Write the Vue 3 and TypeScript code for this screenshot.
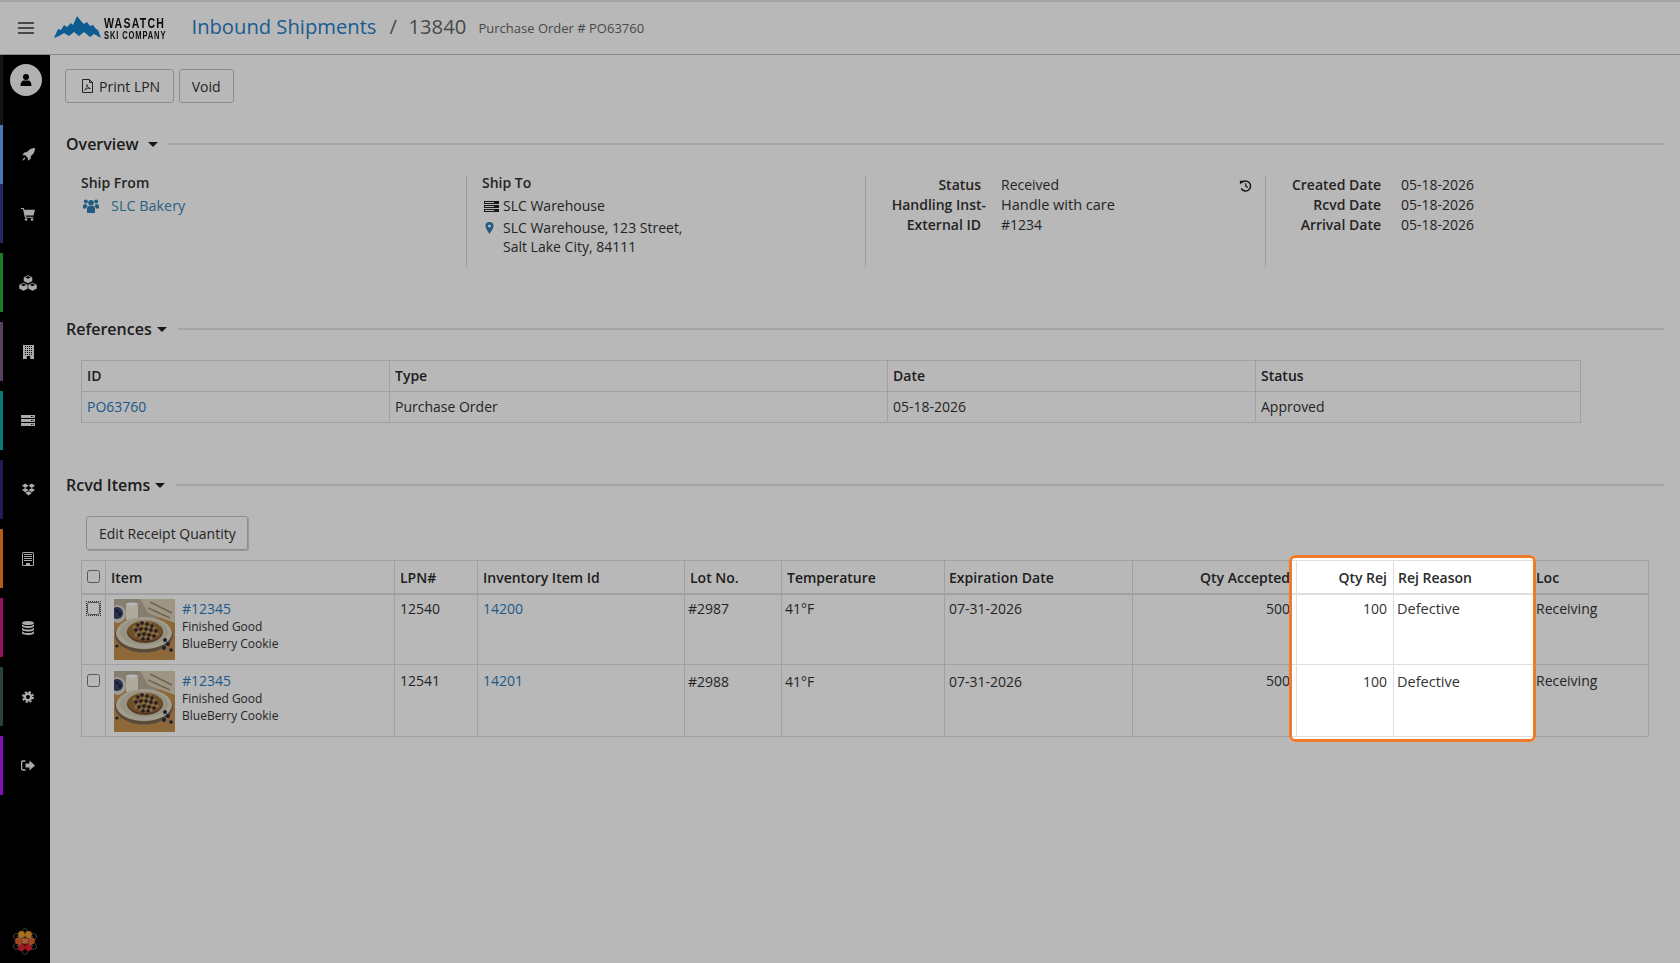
<script setup lang="ts">
interface Row {
  id: number
  lpn: string
  inv: string
  lot: string
  first: boolean
}
const rows: Row[] = [
  { id: 1, lpn: '12540', inv: '14200', lot: '#2987', first: true },
  { id: 2, lpn: '12541', inv: '14201', lot: '#2988', first: false }
]
const berries: [number, number][] = [
  [24, 26], [28, 24], [33, 25], [38, 27], [22, 31], [27, 30], [32, 30], [37, 31], [42, 32], [25, 36], [30, 35], [35, 36], [40, 37], [29, 40], [34, 40]
]
const crumbs: [number, number][] = [
  [20, 28], [26, 27], [30, 27], [35, 28], [40, 29], [24, 33], [29, 32], [34, 33], [39, 34], [43, 35], [22, 36], [27, 38], [32, 38], [37, 39], [31, 23], [36, 23], [25, 23]
]
</script>

<template>
  <div class="page">
    <header class="topbar">
      <button class="burger" aria-label="Menu"><span></span><span></span><span></span></button>
      <div class="logo">
        <svg class="peak" width="47" height="22" viewBox="0 0 47 22"><polygon points="0,22 4,13 7,14 10,9 13,11 17,7 19,9 23,0 27,5 30,8 33,6 36,10 39,9 42,13 44,14 47,22 40,18 36,21 30,16 25,20 20,16 15,20 10,17 5,20" /></svg>
        <div class="wordmark">
          <span class="wm-top">WASATCH</span>
          <span class="wm-bot">SKI COMPANY</span>
        </div>
      </div>
      <a class="crumb">Inbound Shipments</a>
      <span class="slash">/</span>
      <span class="docno">13840</span>
      <span class="subno">Purchase Order # PO63760</span>
    </header>

    <div class="body">
      <nav class="side">
        <div class="avatar-wrap">
          <div class="avatar">
            <svg width="14" height="14" viewBox="0 0 14 14"><circle cx="7" cy="4" r="3" /><path d="M1.500 13c0-3.600 1.600-5.500 3-5.500h5c1.400 0 3 1.900 3 5.500z" /></svg>
          </div>
        </div>
        <a class="nav blue first-nav">
          <svg width="15" height="15" viewBox="0 0 16 16"><path d="M15 1c-3.800.1-6.500 1.600-8.600 4.400L3.600 5.800 1.400 8.400l3.200.5 2.500 2.500.5 3.200 2.600-2.200.4-2.800C13.400 7.500 14.900 4.800 15 1zM3.400 11.200 1 15l3.800-2.400z" /></svg>
        </a>
        <a class="nav navy">
          <svg width="14" height="14" viewBox="0 0 16 16"><path d="M0 1h3.200l.5 2H16l-1.700 6.800H5.400l.3 1.200H14v1.400H4.500L2.200 2.400H0z" /><circle cx="5.800" cy="14.300" r="1.500" /><circle cx="12.600" cy="14.300" r="1.500" /></svg>
        </a>
        <a class="nav green">
          <svg width="18" height="16" viewBox="0 0 18 16">
            <g v-for="c in [[9, 0], [4.500, 7.500], [13.500, 7.500]]" :key="c[0]" :transform="`translate(${c[0] - 4.500} ${c[1]})`">
              <polygon points="4.500,0 9,2.200 9,6.300 4.500,8.500 0,6.300 0,2.200" stroke="#000" stroke-width=".5" />
              <polygon points="4.500,1.100 7.100,2.400 4.500,3.700 1.900,2.400" fill="#000" />
            </g>
          </svg>
        </a>
        <a class="nav plum">
          <svg width="11" height="14" viewBox="0 0 11 14"><rect width="11" height="14" /><path d="M2 1.500h7M2 3.500h7M2 5.500h7M2 7.500h7M2 9.500h7" stroke="#000" stroke-dasharray="1 1" fill="none" /><rect x="3.800" y="11" width="3.400" height="3" fill="#000" /></svg>
        </a>
        <a class="nav teal">
          <svg width="14" height="11" viewBox="0 0 14 11"><rect width="14" height="3" /><rect y="4" width="14" height="3" /><rect y="8" width="14" height="3" /><path d="M10 1.500h2.500M10 5.500h2.500M10 9.500h2.500" stroke="#000" stroke-dasharray="1 .5" /></svg>
        </a>
        <a class="nav indigo">
          <svg width="13" height="13" viewBox="0 0 12 12"><path d="M3 .5 0 2.500l3 2 3-2zM9 .5l-3 2 3 2 3-2zM0 6.500l3 2 3-2-3-2zM12 6.500l-3 2-3-2 3-2zM3 9.300l3 2.200 3-2.200-3-2z" /></svg>
        </a>
        <a class="nav orange">
          <svg width="12" height="14" viewBox="0 0 12 14"><path fill-rule="evenodd" d="M1.500 0h9A1.500 1.500 0 0 1 12 1.500v11a1.500 1.500 0 0 1-1.500 1.500h-9A1.500 1.500 0 0 1 0 12.500v-11A1.500 1.500 0 0 1 1.500 0zM1 1v12h3v-2h4v2h3V1z" /><path d="M2 2h8v1H2zM2 4h8v1H2zM2 6h8v1H2zM2 8h8v1H2z" /></svg>
        </a>
        <a class="nav magenta">
          <svg width="12" height="14" viewBox="0 0 12 14"><ellipse cx="6" cy="2" rx="6" ry="2" /><path d="M0 3.200C1 4.500 3.500 5 6 5s5-.5 6-1.800V5c0 1.200-2.700 2-6 2S0 6.200 0 5zM0 6.700C1 8 3.500 8.500 6 8.500s5-.5 6-1.800v1.800c0 1.200-2.700 2-6 2s-6-.8-6-2zM0 10.200c1 1.300 3.500 1.800 6 1.800s5-.5 6-1.800V12c0 1.200-2.700 2-6 2s-6-.8-6-2z" /></svg>
        </a>
        <a class="nav slate">
          <svg width="12" height="12" viewBox="0 0 12 12"><circle cx="6" cy="6" r="3.200" fill="none" stroke="currentColor" stroke-width="2.400" /><circle cx="6" cy="6" r="5" fill="none" stroke="currentColor" stroke-width="2" stroke-dasharray="2.200 1.730" /></svg>
        </a>
        <a class="nav violet">
          <svg width="14" height="11" viewBox="0 0 14 11"><path d="M4.500 1H2a1.400 1.400 0 0 0-1.400 1.400v6.200A1.400 1.400 0 0 0 2 10h2.500" fill="none" stroke="currentColor" stroke-width="1.300" /><path d="M4.500 3.500h4V.6L14 5.500l-5.500 4.900V7.500h-4z" /></svg>
        </a>
        <div class="brand">
          <svg width="24" height="27" viewBox="0 0 24 27">
            <g fill="none" stroke="#777" stroke-width=".7">
              <ellipse cx="12" cy="13.500" rx="5" ry="13" />
              <ellipse cx="12" cy="13.500" rx="5" ry="13" transform="rotate(60 12 13.500)" />
              <ellipse cx="12" cy="13.500" rx="5" ry="13" transform="rotate(-60 12 13.500)" />
            </g>
            <circle cx="8.500" cy="6.500" r="3.400" fill="#ec9a2a" />
            <circle cx="15.500" cy="6.500" r="3.400" fill="#ec9a2a" />
            <circle cx="5.500" cy="13" r="3.400" fill="#e5632a" />
            <circle cx="12" cy="13" r="3.400" fill="#e5632a" />
            <circle cx="18.500" cy="13" r="3.400" fill="#e5632a" />
            <circle cx="8.500" cy="19.500" r="3.400" fill="#e0202c" />
            <circle cx="15.500" cy="19.500" r="3.400" fill="#e0202c" />
            <path d="M4 18 20 8M20 18 4 8" stroke="#bbb" stroke-width=".7" />
          </svg>
        </div>
      </nav>

      <main class="main">
        <div class="toolbar">
          <button class="btn print">
            <svg width="13" height="14" viewBox="0 0 13 14"><path d="M1.500.5h7l3 3v10h-10z M8.500.5v3h3" fill="none" stroke="#333" /><path d="M3.500 11c2-1 2.800-3.500 2.500-5.500.2 2 1.200 3.500 3.500 4-2.200-.2-4.500.2-6 1.500z" fill="none" stroke="#333" stroke-width=".8" /></svg>
            Print LPN
          </button>
          <button class="btn void">Void</button>
        </div>

        <section class="overview-sec">
          <h2 class="sec-head overview-head"><span>Overview</span><i class="caret"></i><b class="rule"></b></h2>
          <div class="overview">
            <div class="ov-col ov-from">
              <div class="ov-title">Ship From</div>
              <div class="ov-line">
                <svg class="ico-group" width="16" height="14" viewBox="0 0 16 14"><circle cx="8" cy="3.800" r="2.800" /><circle cx="2.900" cy="2.600" r="2" /><circle cx="13.100" cy="2.600" r="2" /><path d="M4 14V9.500C4 8 5 7 6 7h4c1 0 2 1 2 2.500V14zM0 9.500V7c0-1 .8-1.800 1.700-1.800h1.800c.2 1.100.7 1.700 1.200 2.100C3.800 7.700 3 8.600 3 9.500zM16 9.500V7c0-1-.8-1.800-1.700-1.800h-1.800c-.2 1.100-.7 1.700-1.200 2.100.9.400 1.700 1.300 1.700 2.200z" /></svg>
                <a class="link">SLC Bakery</a>
              </div>
            </div>
            <div class="ov-col ov-to">
              <div class="ov-title">Ship To</div>
              <div class="ov-line tight">
                <svg width="15" height="11" viewBox="0 0 15 11"><path d="M0 0h15v3H0zM0 4h15v3H0zM0 8h15v3H0z" /><path d="M1 1.500h9M1 5.500h9M1 9.500h9" stroke="#fff" /></svg>
                <span>SLC Warehouse</span>
              </div>
              <div class="ov-line tight addr">
                <svg class="pin" width="15" height="12" viewBox="0 0 15 12"><path fill-rule="evenodd" d="M5.500 0a4 4 0 0 1 4 4c0 2.200-2.500 5.500-4 8-1.500-2.500-4-5.800-4-8a4 4 0 0 1 4-4zm0 2.500a1.500 1.500 0 1 0 0 3 1.500 1.500 0 0 0 0-3z" /></svg>
                <span>SLC Warehouse, 123 Street,<br />Salt Lake City, 84111</span>
              </div>
            </div>
            <div class="ov-col ov-status">
              <dl class="facts">
                <dt>Status</dt><dd>Received</dd>
                <dt class="over">Handling Inst-</dt><dd class="wide">Handle with care</dd>
                <dt>External ID</dt><dd>#1234</dd>
              </dl>
              <svg class="history" width="13" height="12" viewBox="0 0 13 12"><path d="M2.600 2.900A5 5 0 1 1 2.200 8.500" fill="none" stroke="#222" stroke-width="1.500" /><path d="M.8.800 4.800.8 1 4.500z" fill="#222" /><path d="M6.800 3.200v3l2 1.200" fill="none" stroke="#222" stroke-width="1.300" /></svg>
            </div>
            <div class="ov-col ov-dates">
              <dl class="facts">
                <dt>Created Date</dt><dd>05-18-2026</dd>
                <dt>Rcvd Date</dt><dd>05-18-2026</dd>
                <dt>Arrival Date</dt><dd>05-18-2026</dd>
              </dl>
            </div>
          </div>
        </section>

        <section class="refs-sec">
          <h2 class="sec-head"><span>References</span><i class="caret"></i><b class="rule"></b></h2>
          <table class="grid refs">
            <colgroup><col class="r1" /><col class="r2" /><col class="r3" /><col class="r4" /></colgroup>
            <thead><tr><th>ID</th><th>Type</th><th>Date</th><th>Status</th></tr></thead>
            <tbody><tr><td><a class="link2">PO63760</a></td><td>Purchase Order</td><td>05-18-2026</td><td>Approved</td></tr></tbody>
          </table>
        </section>

        <section class="items-sec">
          <h2 class="sec-head"><span>Rcvd Items</span><i class="caret"></i><b class="rule"></b></h2>
          <button class="btn edit">Edit Receipt Quantity</button>
          <table class="grid items">
            <colgroup>
              <col class="c1" /><col class="c2" /><col class="c3" /><col class="c4" /><col class="c5" /><col class="c6" /><col class="c7" /><col class="c8" /><col class="c9" /><col class="c10" /><col class="c11" />
            </colgroup>
            <thead>
              <tr>
                <th class="chk"><input type="checkbox" aria-label="Select all" /></th>
                <th>Item</th><th>LPN#</th><th>Inventory Item Id</th><th>Lot No.</th><th>Temperature</th>
                <th class="exp">Expiration Date</th><th class="num">Qty Accepted</th><th class="num">Qty Rej</th><th class="rej-head">Rej Reason</th><th class="loc">Loc</th>
              </tr>
            </thead>
            <tbody>
              <tr v-for="r in rows" :key="r.id" :class="r.first ? 'row-a' : 'row-b'">
                <td class="chk"><input type="checkbox" :class="{ focused: r.first }" aria-label="Select row" /></td>
                <td>
                  <div class="item">
                    <svg class="thumb" width="61" height="61" viewBox="0 0 61 61">
                      <rect width="61" height="61" fill="#c4904f" />
                      <rect width="61" height="19" fill="#b9ad9a" />
                      <polygon points="26,0 61,0 61,24 34,14" fill="#dccfb8" />
                      <path d="M36 3 58 14M34 9 56 19" stroke="#a18a6c" stroke-width="1.500" />
                      <ellipse cx="4" cy="15" rx="8" ry="9" fill="#ddd6c6" />
                      <ellipse cx="3" cy="14" rx="6" ry="6" fill="#36446b" />
                      <circle cx="3" cy="12" r="1.500" fill="#1c2338" /><circle cx="6" cy="15" r="1.500" fill="#1c2338" />
                      <rect x="12" y="5" width="12" height="17" rx="2" fill="#f1ecdc" />
                      <ellipse cx="18" cy="5" rx="6" ry="1.500" fill="#fff" />
                      <ellipse cx="30" cy="36" rx="29" ry="17.500" fill="#7d6a4e" />
                      <ellipse cx="30" cy="34" rx="28" ry="16" fill="#e0d9c5" />
                      <ellipse cx="30" cy="33" rx="24" ry="13" fill="#d2cab4" />
                      <ellipse cx="31" cy="33" rx="18" ry="11" fill="#7a5230" />
                      <ellipse cx="31" cy="32" rx="17" ry="10" fill="#99703f" />
                      <circle v-for="(b, i) in crumbs" :key="'c' + i" :cx="b[0]" :cy="b[1]" r="1.600" fill="#c49a5e" />
                      <circle v-for="(b, i) in berries" :key="i" :cx="b[0]" :cy="b[1]" r="1.700" fill="#2d2633" />
                      <circle cx="51" cy="41" r="2" fill="#232a48" /><circle cx="54" cy="45" r="2" fill="#232a48" /><circle cx="50" cy="49" r="2" fill="#232a48" /><circle cx="57" cy="51" r="1.800" fill="#232a48" /><circle cx="3" cy="47" r="1.600" fill="#232a48" />
                    </svg>
                    <div class="item-text">
                      <a class="link2">#12345</a>
                      <span class="kind">Finished Good</span>
                      <span>BlueBerry Cookie</span>
                    </div>
                  </div>
                </td>
                <td>{{ r.lpn }}</td>
                <td><a class="link2">{{ r.inv }}</a></td>
                <td class="tight-left low">{{ r.lot }}</td>
                <td class="tight-left low">41°F</td>
                <td class="exp low">07-31-2026</td>
                <td class="num">500</td>
                <td class="num low">100</td>
                <td class="reason low">Defective</td>
                <td class="loc">Receiving</td>
              </tr>
            </tbody>
          </table>
        </section>
      </main>
    </div>

    <div class="spotlight" aria-hidden="true"></div>
  </div>
</template>

<style>
html, body { margin: 0; padding: 0; background: #fff; }
</style>

<style scoped>
.page {
  position: relative;
  width: 1680px;
  height: 963px;
  overflow: hidden;
  background: #fff;
  color: #333;
  font-family: "Open Sans", "Liberation Sans", sans-serif;
  font-size: 14px;
  display: flex;
  flex-direction: column;
}
.topbar {
  box-sizing: border-box;
  height: 55px;
  flex: none;
  display: flex;
  align-items: center;
  border-top: 2px solid #e4e4e4;
  border-bottom: 1px solid #bdbdbd;
  padding-left: 18px;
}
.burger {
  width: 15.500px;
  height: 13px;
  padding: 0;
  border: 0;
  background: none;
  display: flex;
  flex-direction: column;
  justify-content: space-between;
  margin-right: 20px;
}
.burger span { display: block; height: 2.400px; background: #666; }
.logo { display: flex; align-items: flex-start; width: 138px; flex: none; margin-top: -1px; }
.peak { fill: #1280ca; flex: none; }
.wordmark { margin-left: 3px; display: flex; flex-direction: column; color: #111; font-family: "Liberation Sans", sans-serif; font-weight: 700; }
.wm-top { font-size: 15.500px; line-height: 13px; letter-spacing: 1.800px; transform: scaleX(.68); transform-origin: left; white-space: nowrap; }
.wm-bot { font-size: 10.500px; line-height: 10px; margin-top: 1px; letter-spacing: 1.200px; transform: scaleX(.72); transform-origin: left; white-space: nowrap; }
.crumb { font-size: 20.200px; color: #277fc8; line-height: 28px; margin-top: -5px; white-space: nowrap; }
.slash { font-size: 20.200px; color: #666; margin: -5px 0 0 13px; width: 19px; }
.docno { font-size: 20.200px; color: #666; margin-top: -5px; width: 70px; }
.subno { font-size: 13px; color: #666; white-space: nowrap; }

.body { flex: 1; display: flex; min-height: 0; }
.side {
  flex: none;
  width: 50px;
  background: #000;
  display: flex;
  flex-direction: column;
  color: #ededed;
  fill: #ededed;
}
.avatar-wrap { box-sizing: border-box; height: 70px; border-left: 3px solid #1b1b1b; padding: 9px 0 0 7px; }
.avatar {
  width: 32px;
  height: 32px;
  border-radius: 50%;
  background: #f4f4f4;
  display: flex;
  align-items: center;
  justify-content: center;
  fill: #000;
}
.nav {
  box-sizing: border-box;
  height: 59px;
  margin-bottom: 10px;
  border-left: 3px solid #000;
  padding-left: 3px;
  display: flex;
  align-items: center;
  justify-content: center;
  flex: none;
}
.first-nav { margin-bottom: 0; }
.blue { border-color: #67a7fb; }
.navy { border-color: #353a8e; }
.green { border-color: #2baa3a; }
.plum { border-color: #795985; }
.teal { border-color: #0eaaa7; }
.indigo { border-color: #312479; }
.orange { border-color: #f98424; }
.magenta { border-color: #d5158e; }
.slate { border-color: #385c58; }
.violet { border-color: #af19ff; }
.brand { margin-top: auto; padding: 0 0 8px 13px; height: 27px; }

.main { flex: 1; min-width: 0; padding: 14px 16px 0; }
.toolbar { display: flex; gap: 5px; margin-left: -1px; }
.btn {
  box-sizing: border-box;
  height: 34px;
  padding: 0 12.500px;
  border: 1px solid #c4c4c4;
  border-radius: 3px;
  background: transparent;
  color: #333;
  font: 14px "Open Sans", "Liberation Sans", sans-serif;
  display: inline-flex;
  align-items: center;
  gap: 5px;
}
.print { padding-left: 15px; }
.void { padding: 0 12px; }
.sec-head {
  margin: 0;
  height: 22px;
  display: flex;
  align-items: center;
  font-size: 16px;
  font-weight: 600;
  line-height: 22px;
  color: #2a2a2a;
  white-space: nowrap;
}
.caret {
  width: 0;
  height: 0;
  margin: 1px 11px 0 5px;
  border-left: 5px solid transparent;
  border-right: 5px solid transparent;
  border-top: 5px solid #222;
}
.overview-head .caret { margin-left: 9px; margin-right: 11px; }
.rule { flex: 1; height: 2px; background: #e3e3e3; }
.overview-sec { margin-top: 30px; }
.overview { display: flex; margin: 20px 0 0 15px; height: 92px; }
.ov-col { box-sizing: border-box; height: 92px; }
.ov-from { width: 385px; }
.ov-to, .ov-status, .ov-dates { border-left: 1.500px solid #d8d8d8; }
.ov-to { width: 399px; padding-left: 15px; }
.ov-status { width: 400px; display: flex; justify-content: space-between; padding-right: 13px; }
.ov-dates { flex: 1; }
.ov-title { font-weight: 600; line-height: 16px; }
.ov-line { display: flex; align-items: center; gap: 12px; margin-top: 5px; line-height: 20px; }
.ov-line .ico-group { fill: #2f7fb0; margin-left: 2px; }
.ov-line.tight { gap: 4px; margin-left: 2px; fill: #222; }
.addr { align-items: flex-start; margin-top: 3px; line-height: 18.500px; }
.pin { fill: #2f7fb0; margin-top: 3px; }
.link { color: #3c87b4; font-size: 14.400px; }
.link2 { color: #2a7cc0; }
.facts {
  margin: 0;
  display: grid;
  grid-template-columns: 115px auto;
  column-gap: 20px;
  grid-auto-rows: 20px;
  align-content: start;
  line-height: 20px;
}
.facts dt { font-weight: 600; text-align: right; white-space: nowrap; }
.facts dd { margin: 0; white-space: nowrap; }
.facts .over { margin-right: -5px; }
.facts .wide { font-size: 14.500px; }
.history { margin-top: 5px; flex: none; }

.refs-sec { margin-top: 51px; }
.grid {
  border-collapse: collapse;
  table-layout: fixed;
  margin-left: 15px;
  color: #333;
}
.grid th, .grid td {
  border: 1px solid #dedede;
  padding: 0 5px;
  text-align: left;
  line-height: 20px;
  box-sizing: border-box;
}
.grid th { font-weight: 600; color: #2b2b2b; }
.refs { width: 1499px; margin-top: 20px; }
.refs th, .refs td { height: 31px; }
.r1 { width: 308px; } .r2 { width: 498px; } .r3 { width: 368px; } .r4 { width: 325px; }
.items-sec { margin-top: 51px; }
.edit { display: flex; margin: 20px 0 0 20px; padding: 0 11.500px 0 12px; height: 34px; box-shadow: 1px 1px 0 #d4d4d4; }
.items { width: 1567px; margin-top: 10px; }
.c1 { width: 24px; } .c2 { width: 289px; } .c3 { width: 83px; } .c4 { width: 207px; } .c5 { width: 97px; } .c6 { width: 163px; } .c7 { width: 188px; } .c8 { width: 164px; } .c9 { width: 97px; } .c10 { width: 140px; } .c11 { width: 115px; }
.items th { height: 33px; border-bottom-width: 2px; padding-top: 2px; }
.items td { vertical-align: top; padding-top: 6px; }
.row-a td { height: 71px; padding-top: 4px; }
.row-b td { height: 72px; }
.row-b .low { padding-top: 7px; }
.items .chk { padding: 0 0 0 5px; vertical-align: top; }
.items th.chk { padding-top: 9px; }
.row-a td.chk { padding-top: 7px; }
.row-b td.chk { padding-top: 9px; }
.chk input { display: block; margin: 0; width: 13px; height: 13px; }
.focused { outline: 1px dotted #444; outline-offset: 0; }
.items .num { text-align: right; padding-right: 6px; }
.items .tight-left { padding-left: 3px; }
.items .exp { padding-left: 4px; }
.items .reason { padding-left: 3px; font-size: 14.500px; }
.items .rej-head { padding-left: 4px; }
.items .loc { padding-left: 2px; }
.item { display: flex; padding-left: 3px; }
.thumb { flex: none; margin-right: 7px; filter: blur(.35px); }
.item-text { display: flex; flex-direction: column; font-size: 12px; line-height: 17px; color: #333; }
.item-text .link2 { font-size: 14px; line-height: 20px; }
.kind { margin-top: -1px; }

.spotlight {
  position: absolute;
  left: 1289px;
  top: 555px;
  width: 247px;
  height: 187px;
  box-sizing: border-box;
  border: 3px solid #ee7b2b;
  border-radius: 6px;
  box-shadow: 0 0 0 3000px rgba(0, 0, 0, .28);
  pointer-events: none;
}
</style>
